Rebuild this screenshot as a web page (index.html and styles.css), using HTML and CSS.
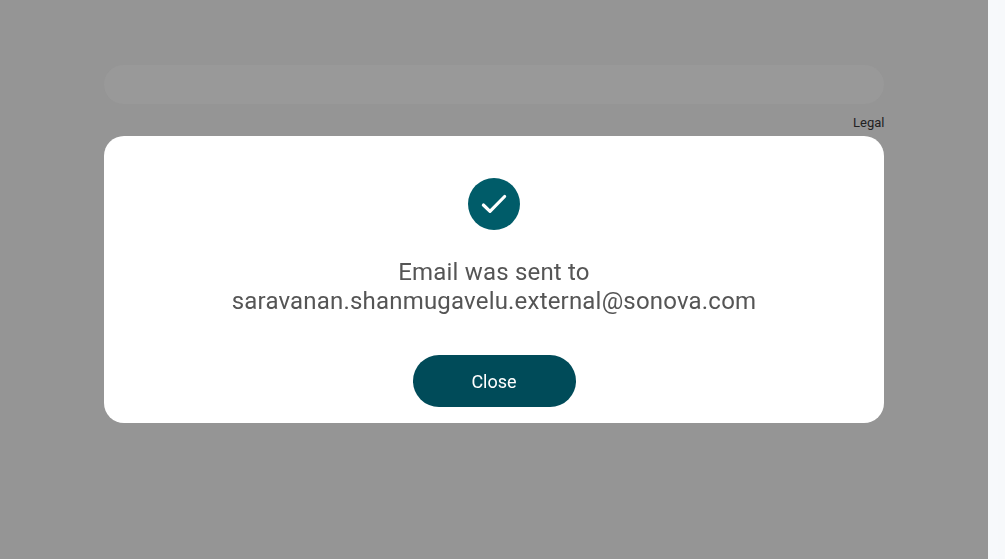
FILE: index.html
```html
<!DOCTYPE html>
<html lang="en">
<head>
<meta charset="utf-8">
<title>Email sent</title>
<link rel="stylesheet" href="styles.css">
</head>
<body>
<div class="page">
  <div class="panel"></div>
  <footer class="footer"><a class="legal">Legal</a></footer>
  <div class="overlay">
    <section class="dialog" role="dialog">
      <svg class="check" viewBox="0 0 52 52" width="52" height="52">
        <circle cx="26" cy="26" r="26" fill="#005c69"/>
        <path d="M15.4 27 22 33.4 36.6 18.5" fill="none" stroke="#fff" stroke-width="3.2" stroke-linecap="round" stroke-linejoin="round"/>
      </svg>
      <p class="message">Email was sent to<br>saravanan.shanmugavelu.external@sonova.com</p>
      <button class="close">Close</button>
    </section>
  </div>
</div>
<div class="gutter"></div>
</body>
</html>
```
FILE: styles.css
```css
* { box-sizing: border-box; }
body { margin: 0; display: flex; height: 559px; overflow: hidden; font-family: Roboto, sans-serif; -webkit-font-smoothing: antialiased; }
.page { position: relative; width: 988px; padding: 65px 104px 0; background: #959595; }
.gutter { width: 17px; background: #f7f9fb; }
.panel { height: 39px; border-radius: 20px; background: #999; }
.footer { display: flex; justify-content: flex-end; padding-top: 11px; margin-right: -0.5px; }
.legal { font-size: 13px; line-height: 16px; color: #222; }
.overlay { position: absolute; inset: 0; display: flex; align-items: center; justify-content: center; will-change: transform; }
.dialog { width: 780px; height: 287px; padding-top: 42px; border-radius: 20px; background: #fff; display: flex; flex-direction: column; align-items: center; }
.check { flex: none; }
.message { margin: 28px 0 39px; font-size: 24px; line-height: 29px; letter-spacing: 0.19px; text-align: center; color: #555; }
.close { width: 163px; height: 52px; border: 0; border-radius: 26px; background: #004b59; color: #fff; font: 400 18px Roboto, sans-serif; }
```
